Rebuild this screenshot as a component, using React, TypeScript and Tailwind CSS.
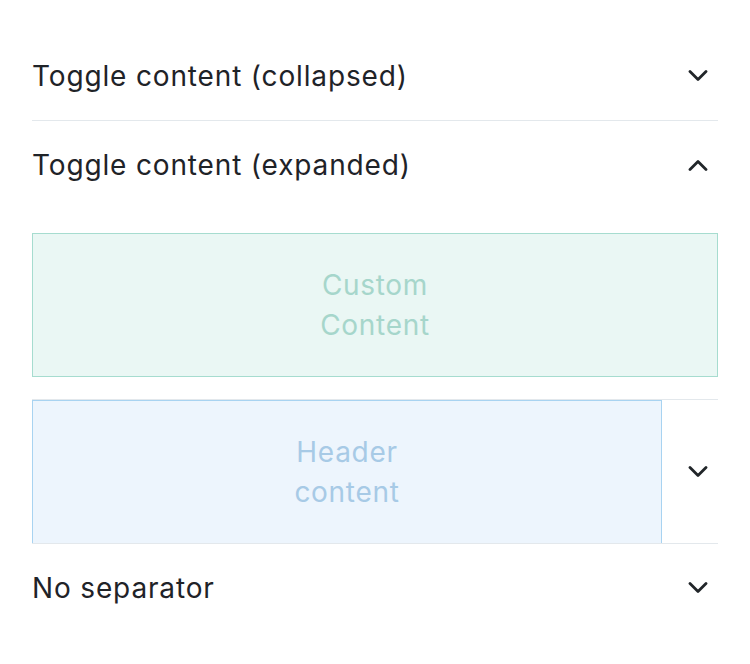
function Chevron({ up = false }: { up?: boolean }) {
  return (
    <svg width="20" height="12" viewBox="0 0 20 12" fill="none" className="text-[#212529]">
      <path
        d={up ? 'M2 10.5 L10 2.5 L18 10.5' : 'M2 1.5 L10 9.5 L18 1.5'}
        stroke="currentColor"
        strokeWidth="2.8"
        strokeLinecap="round"
        strokeLinejoin="round"
      />
    </svg>
  );
}

function Row({ title, up = false, border = true }: { title: string; up?: boolean; border?: boolean }) {
  return (
    <div className={border ? 'border-b border-[#e3e8ec]' : ''}>
      <div className="flex items-center justify-between h-[88px]">
        <span className="text-[28px] text-[#1f2328] tracking-[0.85px]">{title}</span>
        <div className="w-[40px] flex justify-center">
          <Chevron up={up} />
        </div>
      </div>
    </div>
  );
}

export default function App() {
  return (
    <div className="w-[750px] h-[664px] bg-white font-['Inter','Noto_Sans',sans-serif]">
      <div className="pt-[32px] pl-[32px] pr-[32px]">
        <Row title="Toggle content (collapsed)" />

        {/* Expanded row */}
        <div className="border-b border-[#e3e8ec]">
          <div className="flex items-center justify-between h-[88px]">
            <span className="text-[28px] text-[#1f2328] tracking-[0.85px]">Toggle content (expanded)</span>
            <div className="w-[40px] flex justify-center">
              <Chevron up />
            </div>
          </div>
          <div className="pt-[24px] pb-[22px]">
            <div className="h-[144px] bg-[#eaf7f4] border border-[#a6dccf] flex items-center justify-center">
              <span className="text-[28px] leading-[40px] tracking-[0.7px] text-[#a6d6cb] text-center">
                Custom
                <br />
                Content
              </span>
            </div>
          </div>
        </div>

        {/* Custom header row */}
        <div className="border-b border-[#e3e8ec] flex items-stretch">
          <div className="flex-1 h-[143px] bg-[#edf5fd] border-x border-t border-[#a8d3f1] flex items-center justify-center">
            <span className="text-[28px] leading-[40px] tracking-[0.7px] text-[#a7cae6] text-center">
              Header
              <br />
              content
            </span>
          </div>
          <div className="w-[56px] flex items-center justify-end pr-[10px]">
            <Chevron />
          </div>
        </div>

        <Row title="No separator" border={false} />
      </div>
    </div>
  );
}
